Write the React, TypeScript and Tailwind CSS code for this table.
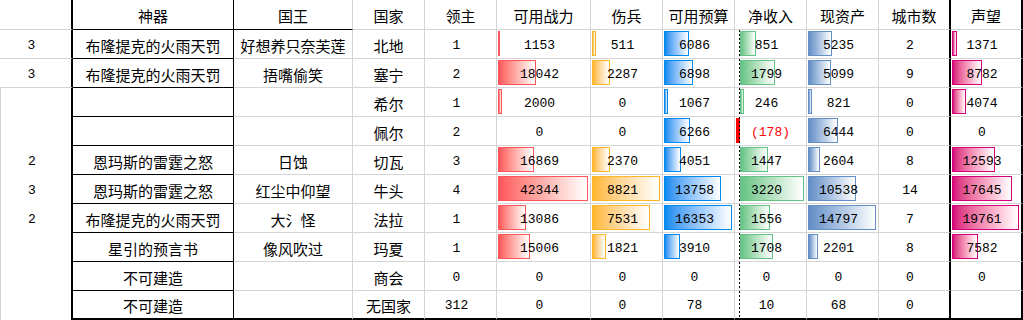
import React from 'react';

type Row = (string | number | null)[];

const HEAD = ['', '神器', '国王', '国家', '领主', '可用战力', '伤兵', '可用预算', '净收入', '现资产', '城市数', '声望'];

const WIDTHS = [
  'w-[73px]', 'w-[161px]', 'w-[119px]', 'w-[72px]', 'w-[72px]', 'w-[94px]',
  'w-[72px]', 'w-[72px]', 'w-[72px]', 'w-[72px]', 'w-[72px]', 'w-[72px]',
];

const ROWS: Row[] = [
  [3, '布隆提克的火雨天罚', '好想养只奈芙莲', '北地', 1, 1153, 511, 6086, 851, 5235, 2, 1371],
  [3, '布隆提克的火雨天罚', '捂嘴偷笑', '塞宁', 2, 18042, 2287, 6898, 1799, 5099, 9, 8782],
  [null, '', '', '希尔', 1, 2000, 0, 1067, 246, 821, 0, 4074],
  [null, '', '', '佩尔', 2, 0, 0, 6266, -178, 6444, 0, 0],
  [2, '恩玛斯的雷霆之怒', '日蚀', '切瓦', 3, 16869, 2370, 4051, 1447, 2604, 8, 12593],
  [3, '恩玛斯的雷霆之怒', '红尘中仰望', '牛头', 4, 42344, 8821, 13758, 3220, 10538, 14, 17645],
  [2, '布隆提克的火雨天罚', '大氵怪', '法拉', 1, 13086, 7531, 16353, 1556, 14797, 7, 19761],
  [null, '星引的预言书', '像风吹过', '玛夏', 1, 15006, 1821, 3910, 1708, 2201, 8, 7582],
  [null, '不可建造', '', '商会', 0, 0, 0, 0, 0, 0, 0, 0],
  [null, '不可建造', '', '无国家', 312, 0, 0, 78, 10, 68, 0, null],
];

// data bar settings per column: biggest value and the width it gets
const BARS: Record<number, { max: number; span: number; fill: string }> = {
  5: { max: 42344, span: 90, fill: 'border-[#ff555a] from-[#ff555a]' },
  6: { max: 8821, span: 68, fill: 'border-[#ffb628] from-[#ffb628]' },
  7: { max: 16353, span: 68, fill: 'border-[#008aef] from-[#008aef]' },
  8: { max: 3220, span: 64, fill: 'border-[#63c384] from-[#63c384]' },
  9: { max: 14797, span: 68, fill: 'border-[#638ec6] from-[#638ec6]' },
  11: { max: 19761, span: 67, fill: 'border-[#d6007b] from-[#d6007b]' },
};

const AXIS = 4.5; // 净收入 axis offset inside the cell
const NEG_SPAN = 3.5;
const NEG_MIN = 178;

function borders(ci: number, ri: number) {
  const parts: string[] = [];
  if (ci === 0 || ci === 10 || ci === 11) parts.push('border-r-2 border-r-black');
  else if (ci === 1) parts.push('border-r border-r-black');
  else parts.push('border-r border-r-[#d4d4d4]');

  if (ci === 0) {
    if (ri <= 2) parts.push('border-b border-b-[#d4d4d4]');
    else parts.push('border-l border-l-[#d4d4d4]');
  } else if (ri === 10) parts.push('border-b-2 border-b-black');
  else if (ci === 1 || (ci === 2 && ri === 0)) parts.push('border-b border-b-black');
  else parts.push('border-b border-b-[#d4d4d4]');
  return parts.join(' ');
}

function DataBar({ ci, value }: { ci: number; value: number }) {
  const bar = BARS[ci];
  if (!bar) return null;
  const base = 'absolute top-[1px] h-[25px] border';
  if (value < 0) {
    const w = (-value / NEG_MIN) * NEG_SPAN;
    return (
      <div
        className={`${base} border-[#ff0000] bg-[#ff0000]`}
        style={{ left: AXIS - w, width: w + 0.5 }}
      />
    );
  }
  const w = (value / bar.max) * bar.span;
  if (w < 1) return null;
  return (
    <div
      className={`${base} bg-linear-to-r to-white ${bar.fill}`}
      style={{ left: ci === 8 ? AXIS : 1, width: w }}
    />
  );
}

function Value({ value }: { value: string | number | null }) {
  if (value === null || value === '') return null;
  if (typeof value === 'number') {
    if (value < 0) {
      return <span className="relative font-['Liberation_Mono'] text-[13px] text-[#ff0000]">({-value})</span>;
    }
    return <span className="relative pr-[8px] font-['Liberation_Mono'] text-[13px]">{value}</span>;
  }
  return <span className="relative whitespace-nowrap">{value}</span>;
}

export default function App() {
  return (
    <div className="w-[1023px] h-[320px] overflow-hidden bg-white text-black font-['Noto_Sans_CJK_SC',sans-serif] text-[15px] leading-none">
      <div className="flex">
        {HEAD.map((h, ci) => (
          <div
            key={ci}
            className={`flex shrink-0 items-center justify-center h-[30px] pt-[2px] ${WIDTHS[ci]} ${borders(ci, 0)}`}
          >
            {h}
          </div>
        ))}
      </div>
      {ROWS.map((row, r) => (
        <div key={r} className="flex">
          {row.map((v, ci) => (
            <div
              key={ci}
              className={`relative flex shrink-0 items-center justify-center h-[29px] pt-[2px] ${WIDTHS[ci]} ${borders(ci, r + 1)}`}
            >
              {typeof v === 'number' && <DataBar ci={ci} value={v} />}
              {ci === 8 && (
                <div className="absolute top-0 bottom-0 left-[4px] w-px bg-[repeating-linear-gradient(to_bottom,#000_0_2px,transparent_2px_4px)]" />
              )}
              <Value value={v} />
            </div>
          ))}
        </div>
      ))}
    </div>
  );
}
